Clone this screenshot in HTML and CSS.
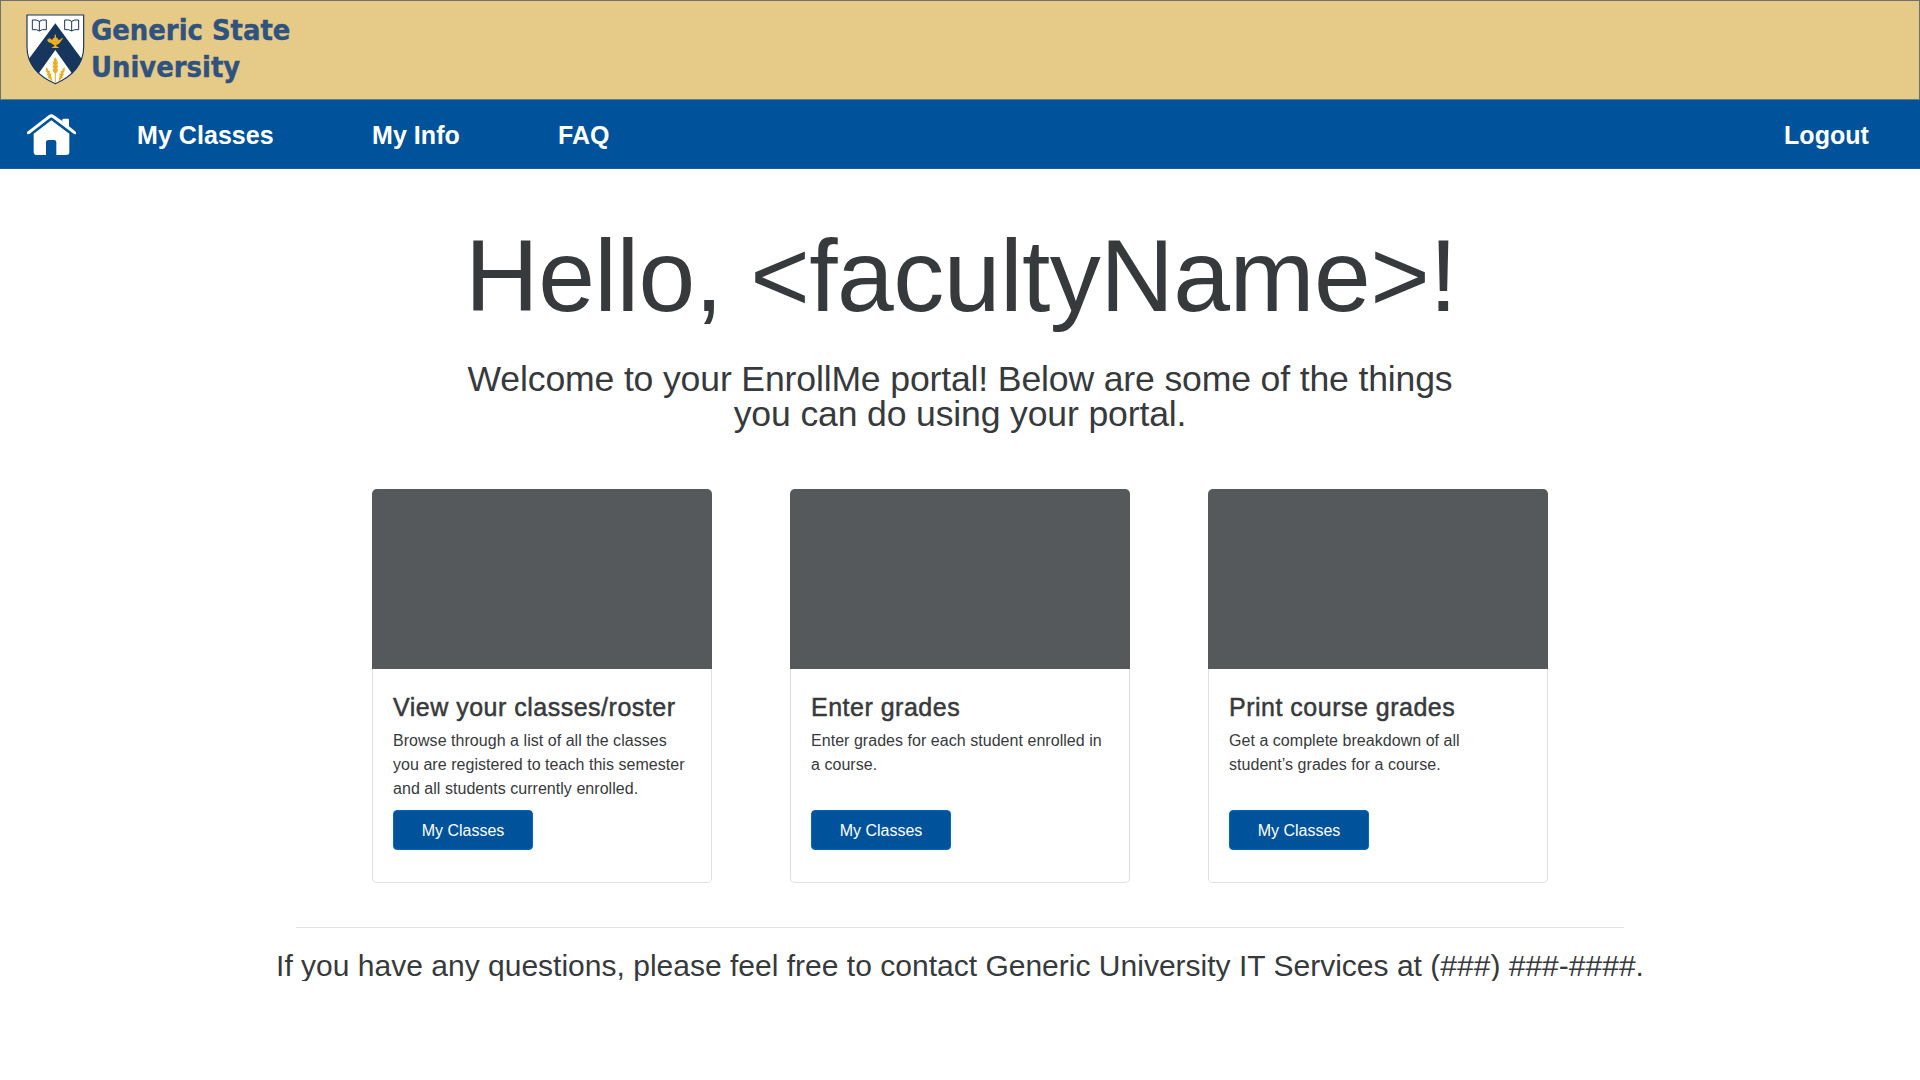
FILE: index.html
```
<!DOCTYPE html>
<html lang="en">
<head>
<meta charset="utf-8">
<title>EnrollMe – Faculty Portal</title>
<link rel="stylesheet" href="styles.css">
</head>
<body>
<header class="banner">
  <svg class="crest" viewBox="0 0 210 246" aria-hidden="true">
    <defs>
      <clipPath id="shield"><path d="M20 20H192V118C192 165 160 207 106 229C52 207 20 165 20 118Z"/></clipPath>
    </defs>
    <g clip-path="url(#shield)">
      <path fill="#fff" d="M20 20H192V230H20Z"/>
      <path fill="#17365d" d="M106 46L198 170L164 208L106 126L48 208L14 170Z"/>
    </g>
    <path fill="none" stroke="#17365d" stroke-width="3.5" d="M21 21H191V118C191 165 159 205 106 227C53 205 21 165 21 118Z"/>
    <g fill="none" stroke="#17365d" stroke-width="3">
      <path d="M37 36Q50 34 58 40Q66 34 79 36V65Q66 63 58 69Q50 63 37 65ZM58 40V69"/>
      <path d="M134 36Q147 34 155 40Q163 34 176 36V65Q163 63 155 69Q147 63 134 65ZM155 40V69"/>
    </g>
    <g fill="#eaae22">
      <path d="M104 80H108V88Q114 90 115 95H120Q124 89 130 90L127 94Q122 102 117 107Q112 110 109 111V114L118 120H94L103 114V111Q96 109 93 105Q82 103 82 96Q82 92 88 94L85 89L92 92L95 95H97Q98 90 104 88Z"/>
      <path d="M104.500 156H107.500V224H104.500Z"/>
      <path d="M106 148L111 156L110 162L114 160L113 168L109 173L114 171L113 179L109 184L114 182L113 190L106 198L99 190L98 182L103 184L99 179L98 171L103 173L99 168L98 160L102 162L101 156Z"/>
      <path d="M78 178L85 184L84 189L90 188L89 197L94 196L93 204L98 222L89 213L81 206L86 206L79 197L84 198L78 189Z"/>
      <path d="M134 178L127 184L128 189L122 188L123 197L118 196L119 204L114 222L123 213L131 206L126 206L133 197L128 198L134 189Z"/>
    </g>
  </svg>
  <div class="university">Generic State<br>University</div>
</header>

<nav class="navbar">
  <a class="home" aria-label="Home">
    <svg class="home-icon" viewBox="78 336 153 132" aria-hidden="true">
      <path fill="#fff" d="M154 361L208 401V457Q208 465 199 465H169V427Q169 420 162 420H146Q138 420 138 427V465H111Q101 465 101 455V401Z"/>
      <path fill="#fff" d="M81 396L146 346Q154 339 162 346L187 363V359Q187 356 190 356H204Q207 356 207 359V379L228 396V403L222 402L158 354Q154 351 150 354L88 402L81 403Z"/>
    </svg>
  </a>
  <a class="nav-link nav-classes">My Classes</a>
  <a class="nav-link nav-info">My Info</a>
  <a class="nav-link">FAQ</a>
  <a class="nav-link nav-logout">Logout</a>
</nav>

<main>
  <h1 class="greeting">Hello, &lt;facultyName&gt;!</h1>
  <p class="intro">Welcome to your EnrollMe portal! Below are some of the things<br>you can do using your portal.</p>

  <div class="cards">
    <section class="card">
      <div class="card-image"></div>
      <div class="card-body">
        <h2 class="card-title">View your classes/roster</h2>
        <p class="card-text">Browse through a list of all the classes<br>you are registered to teach this semester<br>and all students currently enrolled.</p>
        <a class="button">My Classes</a>
      </div>
    </section>
    <section class="card">
      <div class="card-image"></div>
      <div class="card-body">
        <h2 class="card-title">Enter grades</h2>
        <p class="card-text">Enter grades for each student enrolled in<br>a course.</p>
        <a class="button">My Classes</a>
      </div>
    </section>
    <section class="card">
      <div class="card-image"></div>
      <div class="card-body">
        <h2 class="card-title">Print course grades</h2>
        <p class="card-text">Get a complete breakdown of all<br>student’s grades for a course.</p>
        <a class="button">My Classes</a>
      </div>
    </section>
  </div>

  <hr class="divider">
  <p class="contact">If you have any questions, please feel free to contact Generic University IT Services at (###) ###-####.</p>
</main>
</body>
</html>
```
FILE: styles.css
```
* {
  box-sizing: border-box;
}

body {
  margin: 0;
  background: #fff;
  color: #373a3c;
  font-family: "Liberation Sans", Arial, sans-serif;
}

h1, h2, p {
  margin: 0;
  font-weight: 400;
}

.banner {
  display: flex;
  align-items: flex-start;
  height: 100px;
  padding: 7px 0 0 19px;
  background: #e5cb87;
  border: 1px solid #6f7072;
  border-bottom-color: #5f8184;
}

.crest {
  display: block;
  flex: none;
  width: 70px;
  height: 82px;
}

.university {
  padding: 4px 0 0 1px;
  color: #2f527f;
  font: bold 28.8px/36.500px "DejaVu Sans Condensed", "DejaVu Sans", sans-serif;
  font-stretch: condensed;
  -webkit-text-stroke: 0.4px #2f527f;
}

.navbar {
  display: flex;
  align-items: center;
  height: 69px;
  padding: 0 51px 0 26px;
  background: #00539b;
  border-bottom: 1px solid #265d8e;
}

.home {
  flex: none;
  width: 111px;
}

.home-icon {
  display: block;
  width: 51px;
  height: 44px;
}

.nav-link {
  flex: none;
  padding-top: 1px;
  color: #fff;
  font-size: 25px;
  font-weight: 700;
  line-height: 30px;
  letter-spacing: 0.05px;
}

.nav-classes {
  width: 235px;
}

.nav-info {
  width: 186px;
}

.nav-logout {
  margin-left: auto;
}

.greeting {
  padding: 57px 0 0 2px;
  font-size: 102px;
  line-height: 100px;
  letter-spacing: -0.55px;
  text-align: center;
}

.intro {
  padding-top: 36px;
  font-size: 35.6px;
  line-height: 35px;
  letter-spacing: -0.15px;
  text-align: center;
}

.cards {
  display: flex;
  justify-content: center;
  gap: 78px;
  padding-top: 57px;
}

.card {
  width: 340px;
  height: 394px;
  border-radius: 5px;
  box-shadow: inset 0 0 0 1px #dfdfdf;
  overflow: hidden;
}

.card-image {
  height: 180px;
  background: #55595c;
}

.card-body {
  display: flex;
  flex-direction: column;
  align-items: flex-start;
  padding: 24px 21px 0;
}

.card-title {
  height: 36px;
  font-size: 25px;
  line-height: 29px;
  letter-spacing: 0.5px;
  white-space: nowrap;
  -webkit-text-stroke: 0.5px #373a3c;
}

.card-text {
  height: 81px;
  font-size: 16px;
  line-height: 24px;
  letter-spacing: 0.04px;
  white-space: nowrap;
}

.button {
  width: 140px;
  height: 40px;
  border: 1px solid #0269c2;
  border-radius: 4px;
  background: #00539b;
  color: #fff;
  font-size: 16px;
  line-height: 40px;
  text-align: center;
}

.divider {
  width: 1328px;
  height: 1px;
  margin: 44px auto 0;
  border: 0;
  background: #e1e2e2;
}

.contact {
  padding-top: 23px;
  font-size: 30px;
  line-height: 30px;
  letter-spacing: 0.01px;
  text-align: center;
}
```
